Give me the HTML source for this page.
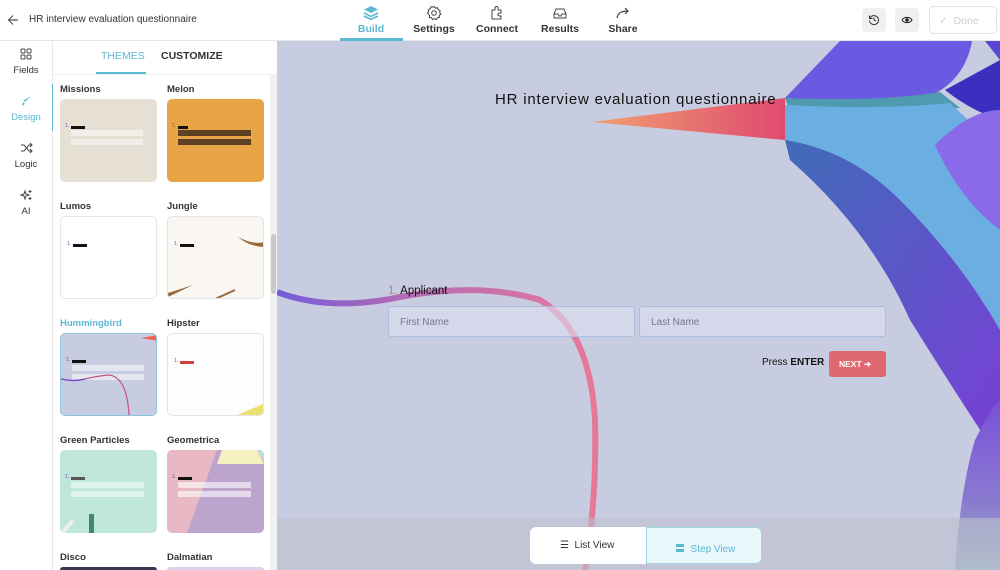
<!DOCTYPE html>
<html><head><meta charset="utf-8"><style>
*{box-sizing:border-box;margin:0;padding:0}
html{width:1000px;height:570px;overflow:hidden}
body{width:1000px;height:570px;overflow:hidden;font-family:"Liberation Sans",sans-serif;background:#fff;position:relative;color:#333}
.hdr{position:absolute;left:0;top:0;width:1000px;height:41px;background:#fff;border-bottom:1px solid #e6e6e6}
.abs{position:absolute}
.tab{position:absolute;top:5px;width:62px;text-align:center;font-size:10.5px;color:#333;font-weight:bold}
.tab svg{display:block;margin:0 auto 2px}
.rail{position:absolute;left:0;top:41px;width:53px;height:529px;background:#fff;border-right:1px solid #e8e8e8}
.ri{position:absolute;left:0;width:52px;text-align:center;font-size:9.5px;color:#333}
.ri svg{display:block;margin:0 auto 5px}
.panel{position:absolute;left:53px;top:41px;width:224px;height:529px;background:#fff;overflow:hidden}
.tn{position:absolute;font-size:9.5px;font-weight:bold;color:#333}
.card{position:absolute;width:97px;height:83px;border-radius:5px;border:1px solid #e5e5e5;overflow:hidden}
.ln{position:absolute;height:3px;background:#111;width:14px}
.ln:before{content:"1.";position:absolute;left:-6px;top:-3px;font-size:5px;color:#7a4ab0}
.bar{position:absolute;height:6px;background:rgba(255,255,255,.5)}
</style></head><body>

<div class="hdr">
 <svg class="abs" style="left:7px;top:14px" width="12" height="12" viewBox="0 0 12 12"><path d="M11 6H1.5M6 1.5L1.5 6 6 10.5" stroke="#555" stroke-width="1.2" fill="none"/></svg>
 <div class="abs" style="left:29px;top:14px;font-size:10px;color:#333">HR interview evaluation questionnaire</div>
 <div class="tab" style="left:340px;color:#5bb8d0"><svg width="16" height="16" viewBox="0 0 16 16"><path d="M8 1L15 4.5 8 8 1 4.5z" fill="#5bb8d0"/><path d="M1 8l7 3.5L15 8M1 11l7 3.5L15 11" stroke="#5bb8d0" stroke-width="1.6" fill="none"/></svg>Build</div>
 <div class="abs" style="left:340px;top:38px;width:63px;height:3px;background:#5bb8d0"></div>
 <div class="tab" style="left:403px"><svg width="16" height="16" viewBox="0 0 16 16"><circle cx="8" cy="8" r="2.3" stroke="#444" fill="none"/><path d="M8 1.5l1.4 1.6 2.1-.4.6 2 2 .8-.5 2 1.3 1.5-1.6 1.3.1 2.1-2.1.3-1 1.9-1.9-.9-1.9.9-1-1.9-2.1-.3.1-2.1L1.5 8l1.3-1.5-.5-2 2-.8.6-2 2.1.4z" stroke="#444" fill="none" stroke-width="1"/></svg>Settings</div>
 <div class="tab" style="left:466px"><svg width="16" height="16" viewBox="0 0 16 16"><path d="M3 5h3V3a1.5 1.5 0 013 0v2h3v3h-1.5a1.5 1.5 0 000 3H12v3H3z" stroke="#444" fill="none"/></svg>Connect</div>
 <div class="tab" style="left:529px"><svg width="16" height="16" viewBox="0 0 16 16"><path d="M2 9l2-5h8l2 5v4H2zM2 9h4l1 2h2l1-2h4" stroke="#444" fill="none"/></svg>Results</div>
 <div class="tab" style="left:592px"><svg width="16" height="16" viewBox="0 0 16 16"><path d="M2 13c1-5 4-7 11-7M10 3l3 3-3 3" stroke="#444" fill="none" stroke-width="1.2"/></svg>Share</div>
 <div class="abs" style="left:862px;top:8px;width:24px;height:24px;border-radius:4px;background:#f0f0f0"><svg style="margin:6px" width="12" height="12" viewBox="0 0 12 12"><path d="M2 4a4.5 4.5 0 11-.5 2.5M1.5 1.5v3h3M6 3.5V6l2 1" stroke="#333" fill="none"/></svg></div>
 <div class="abs" style="left:895px;top:8px;width:24px;height:24px;border-radius:4px;background:#f0f0f0"><svg style="margin:6px" width="12" height="12" viewBox="0 0 12 12"><path d="M1 6c2-3.5 8-3.5 10 0-2 3.5-8 3.5-10 0z" stroke="#222" fill="none"/><circle cx="6" cy="6" r="1.8" fill="#222"/></svg></div>
 <div class="abs" style="left:929px;top:6px;width:68px;height:28px;border:1px solid #e4e4e4;border-radius:4px;font-size:10.5px;color:#ccc;padding:8px 0 0 9px">✓ &nbsp;Done</div>
</div>

<div class="rail">
 <div class="ri" style="top:7px"><svg width="12" height="12" viewBox="0 0 12 12" fill="none" stroke="#444"><rect x="1" y="1" width="4" height="4" rx="1"/><rect x="7" y="1" width="4" height="4" rx="1"/><rect x="1" y="7" width="4" height="4" rx="1"/><rect x="7" y="7" width="4" height="4" rx="1"/></svg>Fields</div>
 <div class="abs" style="left:52px;top:43px;width:2px;height:47px;background:#5bb8d0"></div>
 <div class="ri" style="top:54px;color:#5bb8d0"><svg width="12" height="12" viewBox="0 0 12 12"><path d="M11 1L5 7l-1.5-1.5zM3 7l2 2-3 2z" fill="#5bb8d0"/></svg>Design</div>
 <div class="ri" style="top:101px"><svg width="13" height="12" viewBox="0 0 13 12" fill="none" stroke="#444"><path d="M1 3h3l5 6h3M1 9h3l5-6h3M10 1l2 2-2 2M10 7l2 2-2 2"/></svg>Logic</div>
 <div class="ri" style="top:148px"><svg width="13" height="12" viewBox="0 0 13 12" fill="none" stroke="#444"><path d="M5 2l1 3 3 1-3 1-1 3-1-3-3-1 3-1zM10 1v3M8.5 2.5h3M10 8v3M8.5 9.5h3"/></svg>AI</div>
</div>

<div class="panel">
 <div class="abs" style="left:48px;top:9px;font-size:10.5px;color:#5bb8d0">THEMES</div>
 <div class="abs" style="left:108px;top:9px;font-size:10.5px;font-weight:bold;color:#333">CUSTOMIZE</div>
 <div class="abs" style="left:43px;top:31px;width:50px;height:2px;background:#5bb8d0"></div>
 <div class="abs" style="left:0;top:33px;width:224px;height:1px;background:#eee"></div>
 <div class="abs" style="left:217px;top:33px;width:7px;height:496px;background:#f1f1f1"></div>
 <div class="abs" style="left:218px;top:193px;width:5px;height:60px;background:#c8c8c8;border-radius:3px"></div>

 <div class="tn" style="left:7px;top:43px">Missions</div><div class="tn" style="left:114px;top:43px">Melon</div>
 <div class="card" style="left:7px;top:58px;background:#e5dfd4;border:none"><div class="ln" style="left:11px;top:27px"></div><div class="bar" style="left:11px;top:31px;width:72px"></div><div class="bar" style="left:11px;top:40px;width:72px"></div></div>
 <div class="card" style="left:114px;top:58px;background:#e8a548;border:none"><div class="ln" style="left:11px;top:27px;width:10px"></div><div class="bar" style="left:11px;top:31px;width:73px;background:#5e4024"></div><div class="bar" style="left:11px;top:40px;width:73px;background:#5e4024"></div></div>

 <div class="tn" style="left:7px;top:160px">Lumos</div><div class="tn" style="left:114px;top:160px">Jungle</div>
 <div class="card" style="left:7px;top:175px;background:#fff"><div class="ln" style="left:12px;top:27px"></div></div>
 <div class="card" style="left:114px;top:175px;background:#faf7f2"><div class="ln" style="left:12px;top:27px"></div><svg class="abs" style="left:0;top:0" width="97" height="83"><path d="M70 20q15 8 27 5v5q-15 0-27-10z" fill="#9a6a3a"/><path d="M0 80l25-12-25 8z" fill="#9a6a3a"/><path d="M45 83l22-10" stroke="#9a6a3a" stroke-width="2"/></svg></div>

 <div class="tn" style="left:7px;top:277px;color:#5bb8d0">Hummingbird</div><div class="tn" style="left:114px;top:277px">Hipster</div>
 <div class="card" style="left:7px;top:292px;background:#c8cce0;border:1px solid #8fc4dc"><div class="ln" style="left:11px;top:26px"></div><div class="bar" style="left:11px;top:31px;width:72px"></div><div class="bar" style="left:11px;top:40px;width:72px"></div><svg class="abs" style="left:0;top:0" width="97" height="83"><path d="M80 4l17-3v6z" fill="#f06050"/><path d="M0 45q12 3 24 0t24-4q18 2 20 40" stroke="#c8558c" stroke-width="1.3" fill="none"/><path d="M0 45q12 3 24 0" stroke="#6a4fd0" stroke-width="1.3" fill="none"/></svg></div>
 <div class="card" style="left:114px;top:292px;background:#fdfdfd"><div class="ln" style="left:12px;top:27px;background:#d04040"></div><svg class="abs" style="left:0;top:0" width="97" height="83"><path d="M65 83l32-14v14z" fill="#e8e070"/></svg></div>

 <div class="tn" style="left:7px;top:394px">Green Particles</div><div class="tn" style="left:114px;top:394px">Geometrica</div>
 <div class="card" style="left:7px;top:409px;background:#bfe6da;border:none"><div class="ln" style="left:11px;top:27px;background:#555"></div><div class="bar" style="left:11px;top:32px;width:73px"></div><div class="bar" style="left:11px;top:41px;width:73px"></div><div class="abs" style="left:29px;top:64px;width:5px;height:19px;background:#3f8a6a"></div><div class="abs" style="left:6px;top:68px;width:4px;height:16px;background:#eee;transform:rotate(40deg)"></div></div>
 <div class="card" style="left:114px;top:409px;background:#e8b8c4;border:none"><svg class="abs" style="left:0;top:0" width="97" height="83"><path d="M50 0h47v83H20z" fill="#bca4cc"/><path d="M55 0h35l7 14H50z" fill="#f4f0c0"/><path d="M90 0h7v12z" fill="#bde0dc"/></svg><div class="ln" style="left:11px;top:27px"></div><div class="bar" style="left:11px;top:32px;width:73px;background:rgba(255,255,255,.6)"></div><div class="bar" style="left:11px;top:41px;width:73px;background:rgba(255,255,255,.6)"></div></div>

 <div class="tn" style="left:7px;top:511px">Disco</div><div class="tn" style="left:114px;top:511px">Dalmatian</div>
 <div class="card" style="left:7px;top:526px;height:3px;border-radius:5px 5px 0 0;background:#3a3550;border:none"></div>
 <div class="card" style="left:114px;top:526px;height:3px;border-radius:5px 5px 0 0;background:#ddd0ea;border:none"></div>
</div>

<div class="abs" style="left:277px;top:41px;width:723px;height:529px;background:#c8cce0;overflow:hidden">
 <svg class="abs" style="left:-277px;top:-41px" width="1000" height="570">
  <defs>
   <linearGradient id="bk" x1="0" x2="1"><stop offset="0" stop-color="#f0a070"/><stop offset="1" stop-color="#e04a70"/></linearGradient>
   <linearGradient id="cv" x1="0" x2="1"><stop offset="0" stop-color="#6a4fd8"/><stop offset=".4" stop-color="#b060b0"/><stop offset="1" stop-color="#ea7090"/></linearGradient>
   <linearGradient id="db" x1="0" y1="0" x2="1" y2="1"><stop offset="0" stop-color="#3f6cb8"/><stop offset="1" stop-color="#7a3ed8"/></linearGradient>
   <linearGradient id="br" x1="0" y1="0" x2="0" y2="1"><stop offset="0" stop-color="#7a50d8"/><stop offset=".6" stop-color="#8a7ad0"/><stop offset="1" stop-color="#9ab8c8"/></linearGradient>
  </defs>
  <path d="M785 98L840 41H972Q965 80 930 96Q880 104 785 98z" fill="#6a5ae2"/>
  <path d="M785 98Q880 102 940 92L960 108Q880 112 790 112z" fill="#4f9aae"/>
  <path d="M785 105Q880 110 950 103L1000 150V330Q960 260 900 200Q850 150 785 140z" fill="#6aaee2"/>
  <path d="M785 140Q850 150 900 200Q960 260 1000 330V460Q960 400 910 320Q870 230 790 160z" fill="url(#db)"/>
  <path d="M945 90L1000 60V120Q970 110 945 90z" fill="#3b2fc0"/>
  <path d="M935 145Q970 110 1000 110V230Q960 200 935 145z" fill="#8a6ae8"/>
  <path d="M1000 41V60L985 41z" fill="#5b47d6"/>
  <path d="M975 440Q990 410 1000 400V570H955Q960 490 975 440z" fill="url(#br)"/>
  <path d="M592 122L785 98V140z" fill="url(#bk)"/>
  <path d="M277 292Q330 312 400 297Q480 282 540 300Q590 330 595 420Q597 500 585 570" stroke="url(#cv)" stroke-width="6" fill="none" opacity=".9"/>
 </svg>
 <div class="abs" style="left:218px;top:50px;font-size:15px;letter-spacing:.8px;color:#111">HR interview evaluation questionnaire</div>
 <div class="abs" style="left:111px;top:244px;font-size:11.5px;color:#111"><span style="color:#e07080">1.</span> Applicant</div>
 <div class="abs" style="left:111px;top:265px;width:247px;height:31px;border:1px solid #a8bde0;border-radius:3px;background:rgba(220,224,240,.6);font-size:10px;color:#778;padding:10px 0 0 11px">First Name</div>
 <div class="abs" style="left:362px;top:265px;width:247px;height:31px;border:1px solid #a8bde0;border-radius:3px;background:rgba(220,224,240,.6);font-size:10px;color:#778;padding:10px 0 0 11px">Last Name</div>
 <div class="abs" style="left:485px;top:316px;font-size:10px;color:#111">Press <b>ENTER</b></div>
 <div class="abs" style="left:552px;top:310px;width:57px;height:26px;border-radius:3px;background:#e06870;color:#fff;font-size:8.5px;font-weight:bold;padding:8px 0 0 10px">NEXT ➔</div>
 <div class="abs" style="left:0;top:477px;width:723px;height:52px;background:rgba(190,192,205,.6)"></div>
 <div class="abs" style="left:253px;top:486px;width:116px;height:37px;background:#fff;border-radius:6px 0 0 6px;font-size:10px;color:#333;padding:13px 0 0 30px">☰&nbsp; List View</div>
 <div class="abs" style="left:369px;top:486px;width:116px;height:37px;background:#eaf7fa;border:1px solid #9fd5e2;border-radius:0 6px 6px 0;font-size:10px;color:#5bb8d0;padding:12px 0 0 28px">〓&nbsp; Step View</div>
</div>
</body></html>
